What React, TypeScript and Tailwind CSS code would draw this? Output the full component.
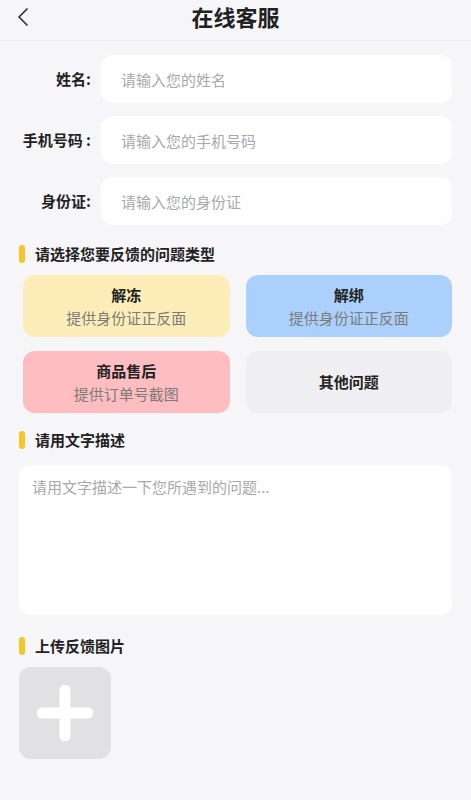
const fields = [
  { label: '姓名:', placeholder: '请输入您的姓名' },
  { label: '手机号码 :', placeholder: '请输入您的手机号码' },
  { label: '身份证:', placeholder: '请输入您的身份证' },
]

const types = [
  { title: '解冻', desc: '提供身份证正反面', bg: 'bg-[#fdeeb9]' },
  { title: '解绑', desc: '提供身份证正反面', bg: 'bg-[#aad0fb]' },
  { title: '商品售后', desc: '提供订单号截图', bg: 'bg-[#fdbdc1]' },
  { title: '其他问题', desc: '', bg: 'bg-[#efeef1]' },
]

function SectionTitle({ children }: { children: string }) {
  return (
    <div className="flex items-center gap-[10px]">
      <span className="h-[18px] w-[6px] rounded-full bg-[#f6c527]" />
      <h3 className="text-[15px] font-bold text-[#222]">{children}</h3>
    </div>
  )
}

export default function App() {
  return (
    <div
      className="min-h-[800px] bg-[#f6f5f8] text-[#222]"
      style={{ fontFamily: '"Noto Sans CJK SC", "Noto Sans", sans-serif' }}
    >
      <header className="relative flex h-[41px] items-center justify-center border-b border-[#efeef1] pb-[9px]">
        <button className="absolute left-[15px] top-[7px]">
          <svg width="14" height="20" viewBox="0 0 14 20" fill="none">
            <path d="M12 2 4 10l8 8" stroke="#333" strokeWidth="1.7" strokeLinecap="round" strokeLinejoin="round" />
          </svg>
        </button>
        <h1 className="text-[22px] font-bold leading-none">在线客服</h1>
      </header>

      <main className="px-[19px] pt-[14px]">
        <div className="flex flex-col gap-[13px]">
          {fields.map((f) => (
            <div key={f.label} className="flex items-center gap-[10px]">
              <label className="w-[72px] whitespace-nowrap text-right text-[15px] font-semibold">
                {f.label}
              </label>
              <input
                className="h-[48px] flex-1 rounded-[12px] bg-white px-[20px] text-[15px] outline-none placeholder:text-[#a8a8ab]"
                placeholder={f.placeholder}
              />
            </div>
          ))}
        </div>

        <div className="mt-[18px]">
          <SectionTitle>请选择您要反馈的问题类型</SectionTitle>
        </div>
        <div className="mt-[9px] grid grid-cols-2 gap-x-[16px] gap-y-[14px] pl-[4px]">
          {types.map((t) => (
            <button
              key={t.title}
              className={`flex h-[62px] flex-col items-center justify-center rounded-[12px] ${t.bg}`}
            >
              <span className="text-[15px] font-bold leading-[23px] text-[#222]">{t.title}</span>
              {t.desc && (
                <span className="text-[15px] leading-[23px] text-[#7d7b78]">{t.desc}</span>
              )}
            </button>
          ))}
        </div>

        <div className="mt-[16px]">
          <SectionTitle>请用文字描述</SectionTitle>
        </div>
        <textarea
          className="mt-[14px] block h-[150px] w-full resize-none rounded-[12px] bg-white px-[13px] py-[11px] text-[15px] outline-none placeholder:text-[#a8a8ab]"
          placeholder="请用文字描述一下您所遇到的问题..."
        />

        <div className="mt-[20px]">
          <SectionTitle>上传反馈图片</SectionTitle>
        </div>
        <button className="mt-[9px] flex h-[92px] w-[92px] items-center justify-center rounded-[12px] bg-[#e1e0e3]">
          <svg width="56" height="56" viewBox="0 0 56 56">
            <path d="M28 5v46M5 28h46" stroke="#fff" strokeWidth="11" strokeLinecap="round" />
          </svg>
        </button>
      </main>
    </div>
  )
}
